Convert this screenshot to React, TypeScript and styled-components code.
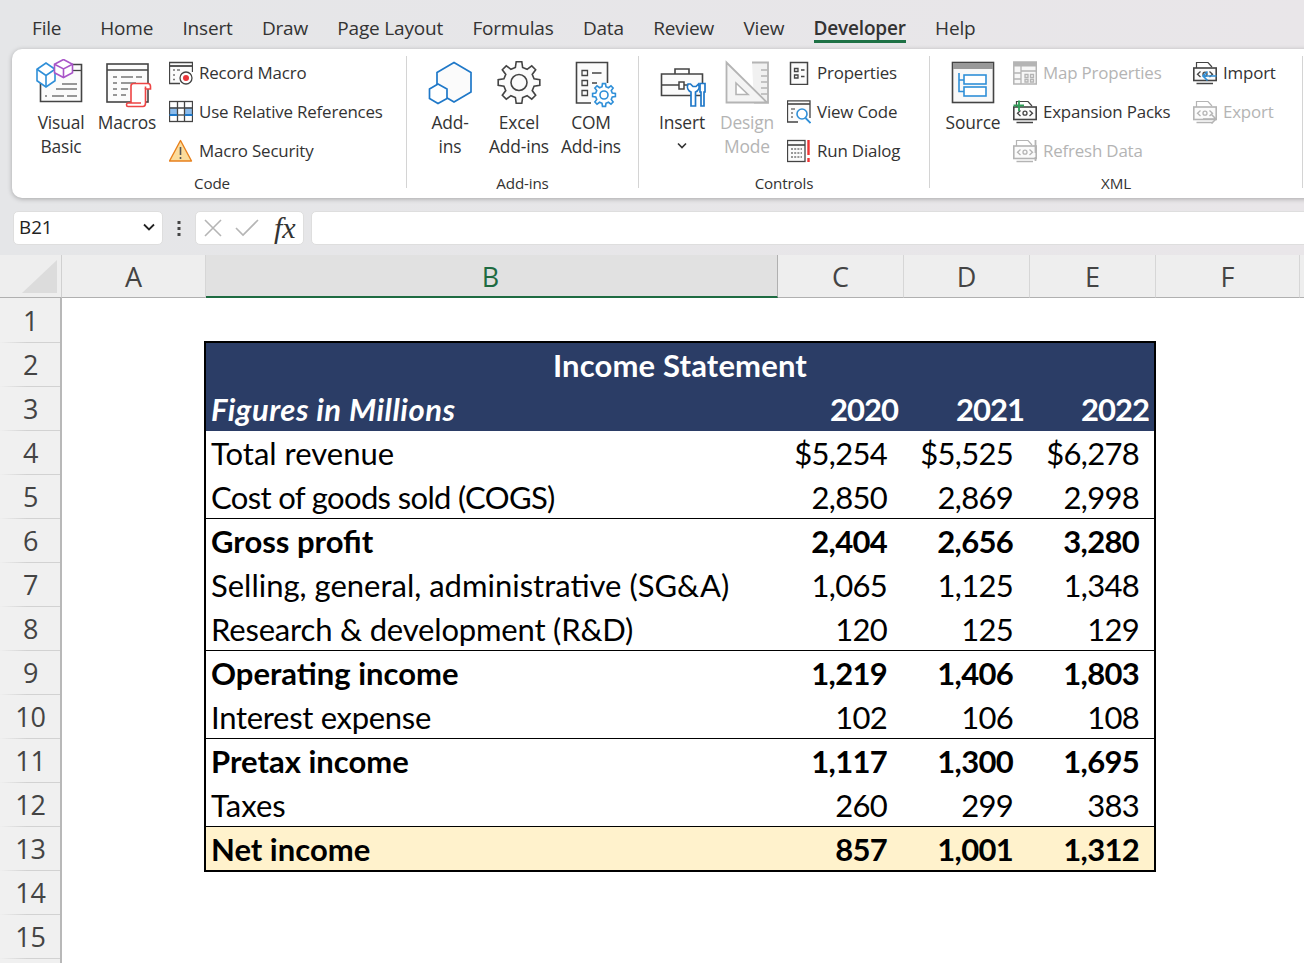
import React from "react";
import styled, { createGlobalStyle } from "styled-components";

const UI_FONT = '"Open Sans", "Noto Sans", sans-serif';
const SHEET_FONT = 'Lato, "Liberation Sans", sans-serif';
const DARK = "#444";
const BLUE = "#2f8fd8";
const MUTED = "#b4b4b4";

const GlobalStyle = createGlobalStyle`
  html, body {
    margin: 0;
    height: 100%;
    overflow: hidden;
    background: #fff;
  }
  * {
    box-sizing: border-box;
  }
`;

const Page = styled.div`
  width: 1304px;
  height: 963px;
  overflow: hidden;
  display: flex;
  flex-direction: column;
  font-family: ${UI_FONT};
  background: linear-gradient(90deg, #e5e6e8, #e9e6e9);
`;

const TabBar = styled.nav`
  height: 49px;
  flex: none;
  display: flex;
  gap: 29.3px;
  padding: 13px 0 0 32px;
`;

const Tab = styled.div<{ $active?: boolean; $first?: boolean }>`
  height: 30px;
  font-size: 19px;
  line-height: 30px;
  letter-spacing: -0.18px;
  color: #333;
  margin-right: ${(p) => (p.$first ? "9.5px" : "0")};
  font-weight: ${(p) => (p.$active ? 600 : 400)};
  border-bottom: ${(p) => (p.$active ? "3px solid #1e7145" : "none")};
`;

const Ribbon = styled.section`
  height: 149px;
  flex: none;
  margin-left: 12px;
  width: 1320px;
  display: flex;
  padding-top: 7px;
  background: #fff;
  border-radius: 10px 0 0 10px;
  box-shadow: 0 1px 5px rgba(0, 0, 0, 0.28);
`;

const Group = styled.div<{ $width: number }>`
  width: ${(p) => p.$width}px;
  height: 132px;
  flex: none;
  border-right: 1px solid #d4d4d4;
`;

const GroupBody = styled.div<{ $pad: number }>`
  height: 117px;
  display: flex;
  padding-left: ${(p) => p.$pad}px;
`;

const GroupLabel = styled.div<{ $inset?: number }>`
  height: 15px;
  padding-left: ${(p) => p.$inset ?? 0}px;
  line-height: 20px;
  font-size: 15.2px;
  letter-spacing: -0.15px;
  text-align: center;
  color: #333;
`;

const LargeButton = styled.div<{ $width: number; $off?: boolean }>`
  width: ${(p) => p.$width}px;
  flex: none;
  padding-top: 3px;
  display: flex;
  flex-direction: column;
  align-items: center;
  font-size: 17.4px;
  line-height: 24px;
  letter-spacing: -0.18px;
  text-align: center;
  white-space: pre-line;
  color: ${(p) => (p.$off ? MUTED : "#333")};

  svg {
    flex: none;
    margin-bottom: -3px;
  }
`;

const Chevron = styled.svg`
  margin-top: 8px;
`;

const SmallColumn = styled.div<{ $gap: number; $width?: number }>`
  margin-left: ${(p) => p.$gap}px;
  width: ${(p) => (p.$width ? `${p.$width}px` : "auto")};
  display: flex;
  flex-direction: column;
  gap: 5px;
`;

const SmallButton = styled.div<{ $off?: boolean }>`
  height: 34px;
  display: flex;
  align-items: center;
  gap: 6px;
  font-size: 16.9px;
  line-height: 32px;
  letter-spacing: -0.18px;
  white-space: nowrap;
  color: ${(p) => (p.$off ? MUTED : "#333")};

  svg {
    flex: none;
  }
`;

const SmallLabel = styled.span`
  margin-top: -1px;
`;

const FormulaRow = styled.div`
  height: 57px;
  flex: none;
  display: flex;
  align-items: flex-start;
  padding: 13px 0 0 13px;
`;

const Field = styled.div`
  height: 34px;
  background: #fff;
  border: 1px solid #dedede;
  border-radius: 5px;
  display: flex;
  align-items: center;
`;

const NameBox = styled(Field)`
  width: 150px;
  justify-content: space-between;
  padding: 0 6px 2px 5px;
  font-size: 18.8px;
  color: #222;
`;

const Dots = styled.div`
  width: 32px;
  height: 34px;
  display: flex;
  align-items: center;
  justify-content: center;
`;

const FormulaButtons = styled(Field)`
  width: 109px;
  gap: 11px;
  padding-left: 7px;
`;

const FxMark = styled.span`
  font-family: "Liberation Serif", serif;
  font-style: italic;
  font-size: 30px;
  line-height: 30px;
  color: #333;
  margin-left: 3px;
`;

const FormulaInput = styled(Field)`
  flex: 1;
  margin-left: 7px;
  margin-right: -10px;
`;

const ColumnHeaders = styled.div`
  height: 43px;
  flex: none;
  display: grid;
  grid-template-columns: 62px 144px 572px 126px 126px 126px 144px 1fr;
  background: #eee;
`;

const Corner = styled.div`
  display: flex;
  justify-content: flex-end;
  align-items: flex-end;
  padding: 0 4px 4px 0;
  border-right: 1px solid #d0d0d0;
  border-bottom: 1px solid #b0b0b0;
`;

const CornerMark = styled.div`
  width: 35px;
  height: 33px;
  background: #dcdcdc;
  clip-path: polygon(100% 0, 100% 100%, 0 100%);
`;

const ColumnHeader = styled.div<{ $selected?: boolean }>`
  display: flex;
  align-items: center;
  justify-content: center;
  padding: 1px ${(p) => (p.$selected ? 2 : 0)}px 0 0;
  font-size: 27px;
  color: ${(p) => (p.$selected ? "#1e6b41" : DARK)};
  background: ${(p) => (p.$selected ? "#e1e1e1" : "transparent")};
  border-right: 1px solid ${(p) => (p.$selected ? "#b0b0b0" : "#d6d6d6")};
  border-bottom: ${(p) => (p.$selected ? "2px solid #1e6b41" : "1px solid #b0b0b0")};
`;

const HeaderRest = styled.div`
  border-bottom: 1px solid #b0b0b0;
`;

const SheetBody = styled.div`
  flex: 1;
  display: flex;
  background: #fff;
`;

const RowHeaders = styled.div`
  width: 62px;
  flex: none;
  display: flex;
  flex-direction: column;
  padding-top: 1px;
  background: #f0f0f0;
  border-right: 2px solid #b8b8b8;
`;

const RowHeader = styled.div`
  height: 44px;
  flex: none;
  display: flex;
  align-items: center;
  justify-content: center;
  padding-left: 1px;
  font-size: 27px;
  letter-spacing: -0.3px;
  color: ${DARK};
  border-bottom: 1px solid;
  border-image: linear-gradient(90deg, #f0f0f0, #d2d2d2 45%) 1;
`;

const Canvas = styled.div`
  flex: 1;
  padding: 43px 0 0 142px;
`;

const Statement = styled.div`
  width: 952px;
  border: 2px solid #000;
  font-family: ${SHEET_FONT};
  font-size: 31px;
  color: #000;
`;

const Row = styled.div<{ $kind?: "head" | "net"; $bold?: boolean; $rule?: boolean }>`
  height: 44px;
  display: grid;
  grid-template-columns: 572px 126px 126px 124px;
  align-items: center;
  font-weight: ${(p) => (p.$bold || p.$kind ? 700 : 400)};
  color: ${(p) => (p.$kind === "head" ? "#fff" : "#000")};
  background: ${(p) =>
    p.$kind === "head" ? "#2b3d66" : p.$kind === "net" ? "#fff2cc" : "transparent"};
  border-bottom: ${(p) => (p.$rule ? "1px solid #000" : "none")};

  &:last-child {
    height: 43px;
  }
`;

const TitleRow = styled(Row)`
  display: flex;
  justify-content: center;
  letter-spacing: 0.15px;
`;

const Label = styled.div<{ $italic?: boolean; $track?: number }>`
  padding-left: 5px;
  white-space: nowrap;
  font-style: ${(p) => (p.$italic ? "italic" : "normal")};
  letter-spacing: ${(p) => (p.$italic ? 0.5 : p.$track ?? 0)}px;
`;

const Value = styled.div<{ $head?: boolean }>`
  text-align: right;
  letter-spacing: ${(p) => (p.$head ? "-1px" : "-0.7px")};
  padding-right: ${(p) => (p.$head ? 6 : 17)}px;

  &:last-child {
    padding-right: ${(p) => (p.$head ? 5 : 15)}px;
  }
`;

const Svg: React.FC<{ size: number; children: React.ReactNode }> = ({ size, children }) => (
  <svg
    width={size}
    height={size}
    viewBox={`0 0 ${size} ${size}`}
    fill="none"
    stroke={DARK}
    strokeWidth={1.3}
  >
    {children}
  </svg>
);

const Cube: React.FC<{ x: number; y: number; w: number; h: number; color: string; width?: number }> = ({
  x,
  y,
  w,
  h,
  color,
  width = 1.6,
}) => {
  const cap = h * 0.26;
  return (
    <g stroke={color} strokeWidth={width} fill="#fff">
      <path
        d={`M${x} ${y + cap}L${x + w / 2} ${y}L${x + w} ${y + cap}V${y + h - cap}L${x + w / 2} ${y + h}L${x} ${y + h - cap}Z`}
      />
      <path
        d={`M${x} ${y + cap}L${x + w / 2} ${y + cap * 2}L${x + w} ${y + cap}M${x + w / 2} ${y + cap * 2}V${y + h}`}
        fill="none"
      />
    </g>
  );
};

const VisualBasicIcon = () => (
  <Svg size={54}>
    <path d="M6.5 8V42.5H47.5V5.5H38" fill="#fbfbfb" strokeWidth={1.6} />
    <path d="M36 11.5H47" />
    <path d="M28 25H43M22 30H43M11 37H13M18 37H30M33 37H43" stroke="#777" strokeDasharray="none" />
    <Cube x={3} y={4} w={18} h={24} color={BLUE} />
    <Cube x={20.5} y={0.5} w={18} h={18} color="#a855c8" />
  </Svg>
);

const MacrosIcon = () => (
  <Svg size={54}>
    <rect x="7" y="5" width="41" height="38" fill="#fbfbfb" strokeWidth={1.6} />
    <path d="M7 11H48" strokeWidth={1.4} />
    <path d="M13 18H17M21 18H33M36 18H42M13 24H17M21 24H36M13 30H17M21 30H28M13 36H17M21 36H26" stroke="#777" />
    <path
      d="M31 44V27C31 25 32 24.5 33.5 24.5H48C50 24.5 50.5 26 50.5 27.5V30H45.5V44C45.5 47 44 47.5 43 47.5H28C26 47.5 26 44 28 44H41"
      fill="#fff"
      stroke="#ee4444"
      strokeWidth={1.6}
    />
    <path d="M45.5 27.5V30" stroke="#ee4444" strokeWidth={1.6} />
  </Svg>
);

const HexagonsIcon = () => (
  <Svg size={54}>
    <path d="M31 3.5L48 13.5V33L31 43L14 33V13.5Z" fill="#fbfbfb" stroke="#1f78c8" strokeWidth={1.7} />
    <path d="M15 25L24 30V39.5L15 44.5L6.5 39.5V30Z" fill="#fff" stroke="#1f78c8" strokeWidth={1.7} />
  </Svg>
);

const gearPath = (cx: number, cy: number, outer: number, inner: number, teeth: number) => {
  const points: string[] = [];
  for (let i = 0; i < teeth; i++) {
    const step = (Math.PI * 2) / teeth;
    const a = i * step - Math.PI / 2;
    const spots: Array<[number, number]> = [
      [a - step * 0.3, inner],
      [a - step * 0.17, outer],
      [a + step * 0.17, outer],
      [a + step * 0.3, inner],
    ];
    spots.forEach(([angle, r]) => {
      points.push(`${(cx + Math.cos(angle) * r).toFixed(2)} ${(cy + Math.sin(angle) * r).toFixed(2)}`);
    });
  }
  return `M${points.join("L")}Z`;
};

const GearIcon = () => (
  <Svg size={54}>
    <path d={gearPath(27, 23.5, 21, 15.5, 8)} fill="#fbfbfb" strokeWidth={1.6} />
    <circle cx="27" cy="23.5" r="8" strokeWidth={1.6} />
  </Svg>
);

const ComIcon = () => (
  <Svg size={54}>
    <path d="M27 44H12.5V3.5H43.5V24" fill="#fbfbfb" strokeWidth={1.6} />
    <path d="M18 11.5H23.5V16.5H18ZM18 21.5H23.5V26.5H18ZM18 31.5H23.5V36.5H18ZM28 14H37.5M28 24H33" />
    <path d={gearPath(40, 36, 11.5, 8.5, 8)} fill="#fff" stroke={BLUE} strokeWidth={1.6} />
    <circle cx="40" cy="36" r="4" stroke={BLUE} strokeWidth={1.6} />
  </Svg>
);

const InsertIcon = () => (
  <Svg size={54}>
    <path d="M6.5 15H47.5V36.5H6.5Z" fill="#fbfbfb" strokeWidth={1.6} />
    <path d="M6.5 26H24M29 26H33" strokeWidth={1.6} />
    <path d="M20 15V10H34V15" strokeWidth={1.6} />
    <rect x="24" y="23" width="5" height="7" fill="#fff" strokeWidth={1.5} />
    <path
      d="M33 25C31.5 29 33.5 32 36 33V47H40.5V33C43 32 45 29 43.5 25L41 27.5H38L35.5 25Z"
      fill="#fff"
      stroke="#1f78c8"
      strokeWidth={1.7}
    />
    <path d="M45 24.5H50V33H49V47H46V33H45Z" fill="#fff" stroke="#1f78c8" strokeWidth={1.7} />
  </Svg>
);

const DesignIcon = () => (
  <Svg size={54}>
    <path d="M32 3.5H48V43.5H34" fill="#f1f1f1" stroke={MUTED} strokeWidth={1.8} />
    <path d="M41 11H47.5M41 17H47.5M41 23H47.5M41 29H47.5M41 35H47.5" stroke={MUTED} />
    <path d="M6.5 3.5L47 43.5H6.5Z" fill="#f4f4f4" stroke={MUTED} strokeWidth={1.8} />
    <path d="M16 24L28 35.5H16Z" fill="#fff" stroke={MUTED} strokeWidth={1.6} />
  </Svg>
);

const SourceIcon = () => (
  <Svg size={54}>
    <rect x="6.5" y="3.5" width="41" height="40" fill="#f8f8f8" strokeWidth={1.6} />
    <rect x="7" y="4" width="40" height="6" fill="#999" stroke="none" />
    <path d="M13 14V32.5H18M13 21H18" stroke={BLUE} strokeWidth={1.6} />
    <rect x="18" y="16" width="22" height="9" fill="#fff" stroke={BLUE} strokeWidth={1.6} />
    <rect x="18" y="28" width="22" height="9" fill="#fff" stroke={BLUE} strokeWidth={1.6} />
  </Svg>
);

const RecordIcon = () => (
  <Svg size={24}>
    <path d="M11 22.5H0.5V1.5H23.5V11" fill="#fbfbfb" />
    <path d="M0.5 5H23.5" strokeWidth={1.8} />
    <path d="M4 9H6M8 9H11M4 14H6M4 18.5H6" stroke="#777" />
    <circle cx="17" cy="17" r="6" fill="#fff" />
    <circle cx="17" cy="17" r="3" fill="#e8353a" stroke="none" />
  </Svg>
);

const RelativeIcon = () => (
  <Svg size={24}>
    <rect x="0.5" y="7.5" width="8" height="7.5" fill="#8cbcec" stroke="none" />
    <rect x="15.5" y="7.5" width="8" height="7.5" fill="#8cbcec" stroke="none" />
    <rect x="0.5" y="1.5" width="23" height="20" />
    <path d="M8.5 1.5V21.5M15.5 1.5V21.5M0.5 8H23.5" />
    <path d="M0.5 15H8.5M15.5 15H23.5" stroke="#1f78c8" strokeWidth={1.8} />
    <path d="M8.5 15H15.5" />
  </Svg>
);

const WarningIcon = () => (
  <Svg size={24}>
    <path d="M11.5 1.5L22.5 22H0.5Z" fill="#fbdc9c" stroke="#e8801c" strokeWidth={1.4} strokeLinejoin="round" />
    <path d="M11.5 8V16M11.5 18V20" stroke="#555" strokeWidth={1.6} />
  </Svg>
);

const PropertiesIcon = () => (
  <Svg size={24}>
    <rect x="3.5" y="1.5" width="17" height="22" fill="#fbfbfb" strokeWidth={1.5} />
    <path d="M7.5 7.5H11V10.5H7.5ZM7.5 14H11V17H7.5ZM14 9H17.5M14 15.5H17.5" />
  </Svg>
);

const ViewCodeIcon = () => (
  <Svg size={24}>
    <path d="M11 22H0.5V0.8H23V18" fill="#fbfbfb" />
    <path d="M0.5 4H23" strokeWidth={1.6} />
    <path d="M4 9H8M4 13H6M4 17H6" stroke="#777" />
    <circle cx="15" cy="14" r="5" fill="#fff" stroke={BLUE} strokeWidth={1.6} />
    <path d="M18.5 18L23.5 23" stroke={BLUE} strokeWidth={1.8} />
  </Svg>
);

const RunDialogIcon = () => (
  <Svg size={24}>
    <rect x="0.5" y="1.5" width="17.5" height="21" fill="#fbfbfb" />
    <path d="M0.5 6H18" strokeWidth={1.6} />
    <path d="M4 10H15M4 14H15M4 18H15" stroke="#777" strokeDasharray="2 1.2" />
    <path d="M21.5 1V16M21.5 19V23" stroke="#ee3333" strokeWidth={2.4} />
  </Svg>
);

const MapPropertiesIcon = () => (
  <Svg size={24}>
    <rect x="0.8" y="1" width="22.5" height="22" fill="#f7f7f7" stroke={MUTED} strokeWidth={1.5} />
    <rect x="1" y="1" width="22" height="4.5" fill={MUTED} stroke="none" />
    <path d="M0.8 12H8M0.8 18H8M8 5V23M8 10H23" stroke={MUTED} strokeWidth={1.3} />
    <path d="M12 13.5H15V16.5H12ZM12 18.5H15V21H12ZM17.5 13.5H20.5V16.5H17.5ZM17.5 18.5H20.5V21H17.5Z" stroke={MUTED} />
  </Svg>
);

const XmlDoc: React.FC<{ color: string }> = ({ color }) => (
  <g stroke={color}>
    <path d="M3.5 7V1.5H15L19 6" strokeWidth={1.2} />
    <rect x="0.8" y="7" width="22.4" height="12.5" fill="#fbfbfb" strokeWidth={1.6} />
    <path d="M3.5 22.5H20" strokeWidth={1.5} />
    <path d="M7.5 10.5L4.5 13.2L7.5 16M16.5 10.5L19.5 13.2L16.5 16" strokeWidth={1.3} />
    <circle cx="12" cy="13.2" r="2" strokeWidth={1.3} />
  </g>
);

const ExpansionIcon = () => (
  <Svg size={24}>
    <XmlDoc color={DARK} />
    <path d="M6 0.5V11M0.5 5.5H11" stroke="#2f9e58" strokeWidth={1.8} />
  </Svg>
);

const RefreshIcon = () => (
  <Svg size={24}>
    <XmlDoc color={MUTED} />
    <path d="M22.5 1V14M22.5 18V22" stroke={MUTED} strokeWidth={1.8} />
  </Svg>
);

const ImportIcon = () => (
  <Svg size={24}>
    <XmlDoc color={DARK} />
    <path d="M23.5 15H10M14.5 10.5L10 15L14.5 19.5" fill="none" stroke={BLUE} strokeWidth={1.7} />
  </Svg>
);

const ExportIcon = () => (
  <Svg size={24}>
    <XmlDoc color={MUTED} />
    <path d="M10 19H23M18.5 14.5L23 19L18.5 23.5" stroke={MUTED} strokeWidth={1.5} />
  </Svg>
);

const DownChevron = () => (
  <Chevron width="12" height="8" viewBox="0 0 12 8" fill="none" stroke="#333" strokeWidth={1.6}>
    <path d="M2 1.5L6 5.5L10 1.5" />
  </Chevron>
);

const tabs = ["File", "Home", "Insert", "Draw", "Page Layout", "Formulas", "Data", "Review", "View", "Developer", "Help"];
const columns = ["A", "B", "C", "D", "E", "F"];
const rowNumbers = Array.from({ length: 15 }, (_, i) => i + 1);

interface StatementLine {
  label: string;
  values: string[];
  bold?: boolean;
  rule?: boolean;
  track?: number;
}

const lines: StatementLine[] = [
  { label: "Total revenue", values: ["$5,254", "$5,525", "$6,278"] },
  { label: "Cost of goods sold (COGS)", values: ["2,850", "2,869", "2,998"], rule: true, track: -0.64 },
  { label: "Gross profit", values: ["2,404", "2,656", "3,280"], bold: true },
  { label: "Selling, general, administrative (SG&A)", values: ["1,065", "1,125", "1,348"] },
  { label: "Research & development (R&D)", values: ["120", "125", "129"], rule: true, track: -0.18 },
  { label: "Operating income", values: ["1,219", "1,406", "1,803"], bold: true },
  { label: "Interest expense", values: ["102", "106", "108"], rule: true, track: -0.3 },
  { label: "Pretax income", values: ["1,117", "1,300", "1,695"], bold: true },
  { label: "Taxes", values: ["260", "299", "383"], rule: true },
];

const App: React.FC = () => {
  return (
    <Page>
      <GlobalStyle />
      <TabBar>
        {tabs.map((tab) => (
          <Tab key={tab} $first={tab === "File"} $active={tab === "Developer"}>
            {tab}
          </Tab>
        ))}
      </TabBar>

      <Ribbon>
        <Group $width={395}>
          <GroupBody $pad={16}>
            <LargeButton $width={66}>
              <VisualBasicIcon />
              {"Visual\nBasic"}
            </LargeButton>
            <LargeButton $width={66}>
              <MacrosIcon />
              Macros
            </LargeButton>
            <SmallColumn $gap={9}>
              <SmallButton>
                <RecordIcon />
                <SmallLabel>Record Macro</SmallLabel>
              </SmallButton>
              <SmallButton>
                <RelativeIcon />
                <SmallLabel>Use Relative References</SmallLabel>
              </SmallButton>
              <SmallButton>
                <WarningIcon />
                <SmallLabel>Macro Security</SmallLabel>
              </SmallButton>
            </SmallColumn>
          </GroupBody>
          <GroupLabel $inset={6}>Code</GroupLabel>
        </Group>

        <Group $width={232}>
          <GroupBody $pad={8}>
            <LargeButton $width={70}>
              <HexagonsIcon />
              {"Add-\nins"}
            </LargeButton>
            <LargeButton $width={68}>
              <GearIcon />
              {"Excel\nAdd-ins"}
            </LargeButton>
            <LargeButton $width={76}>
              <ComIcon />
              {"COM\nAdd-ins"}
            </LargeButton>
          </GroupBody>
          <GroupLabel>Add-ins</GroupLabel>
        </Group>

        <Group $width={291}>
          <GroupBody $pad={11}>
            <LargeButton $width={64}>
              <InsertIcon />
              Insert
              <DownChevron />
            </LargeButton>
            <LargeButton $width={66} $off>
              <DesignIcon />
              {"Design\nMode"}
            </LargeButton>
            <SmallColumn $gap={7}>
              <SmallButton>
                <PropertiesIcon />
                <SmallLabel>Properties</SmallLabel>
              </SmallButton>
              <SmallButton>
                <ViewCodeIcon />
                <SmallLabel>View Code</SmallLabel>
              </SmallButton>
              <SmallButton>
                <RunDialogIcon />
                <SmallLabel>Run Dialog</SmallLabel>
              </SmallButton>
            </SmallColumn>
          </GroupBody>
          <GroupLabel>Controls</GroupLabel>
        </Group>

        <Group $width={373}>
          <GroupBody $pad={16}>
            <LargeButton $width={54}>
              <SourceIcon />
              Source
            </LargeButton>
            <SmallColumn $gap={13} $width={180}>
              <SmallButton $off>
                <MapPropertiesIcon />
                <SmallLabel>Map Properties</SmallLabel>
              </SmallButton>
              <SmallButton>
                <ExpansionIcon />
                <SmallLabel>Expansion Packs</SmallLabel>
              </SmallButton>
              <SmallButton $off>
                <RefreshIcon />
                <SmallLabel>Refresh Data</SmallLabel>
              </SmallButton>
            </SmallColumn>
            <SmallColumn $gap={0}>
              <SmallButton>
                <ImportIcon />
                <SmallLabel>Import</SmallLabel>
              </SmallButton>
              <SmallButton $off>
                <ExportIcon />
                <SmallLabel>Export</SmallLabel>
              </SmallButton>
            </SmallColumn>
          </GroupBody>
          <GroupLabel>XML</GroupLabel>
        </Group>
      </Ribbon>

      <FormulaRow>
        <NameBox>
          B21
          <svg width="14" height="10" viewBox="0 0 14 10" fill="none" stroke="#222" strokeWidth={1.8}>
            <path d="M2 2.5L7 7.5L12 2.5" />
          </svg>
        </NameBox>
        <Dots>
          <svg width="4" height="16" viewBox="0 0 4 16" fill="#444">
            <rect x="0.5" y="1" width="3" height="3" />
            <rect x="0.5" y="7" width="3" height="3" />
            <rect x="0.5" y="13" width="3" height="3" />
          </svg>
        </Dots>
        <FormulaButtons>
          <svg width="20" height="20" viewBox="0 0 20 20" fill="none" stroke="#b5b5b5" strokeWidth={1.6}>
            <path d="M2 2L18 18M18 2L2 18" />
          </svg>
          <svg width="26" height="20" viewBox="0 0 26 20" fill="none" stroke="#b5b5b5" strokeWidth={1.6}>
            <path d="M2 10L9 17L24 2" />
          </svg>
          <FxMark>fx</FxMark>
        </FormulaButtons>
        <FormulaInput />
      </FormulaRow>

      <ColumnHeaders>
        <Corner>
          <CornerMark />
        </Corner>
        {columns.map((col) => (
          <ColumnHeader key={col} $selected={col === "B"}>
            {col}
          </ColumnHeader>
        ))}
        <HeaderRest />
      </ColumnHeaders>

      <SheetBody>
        <RowHeaders>
          {rowNumbers.map((n) => (
            <RowHeader key={n}>{n}</RowHeader>
          ))}
        </RowHeaders>
        <Canvas>
          <Statement>
            <TitleRow $kind="head">Income Statement</TitleRow>
            <Row $kind="head">
              <Label $italic>Figures in Millions</Label>
              <Value $head>2020</Value>
              <Value $head>2021</Value>
              <Value $head>2022</Value>
            </Row>
            {lines.map((line) => (
              <Row key={line.label} $bold={line.bold} $rule={line.rule}>
                <Label $track={line.track}>{line.label}</Label>
                {line.values.map((value, i) => (
                  <Value key={i}>{value}</Value>
                ))}
              </Row>
            ))}
            <Row $kind="net">
              <Label>Net income</Label>
              <Value>857</Value>
              <Value>1,001</Value>
              <Value>1,312</Value>
            </Row>
          </Statement>
        </Canvas>
      </SheetBody>
    </Page>
  );
};

export default App;
